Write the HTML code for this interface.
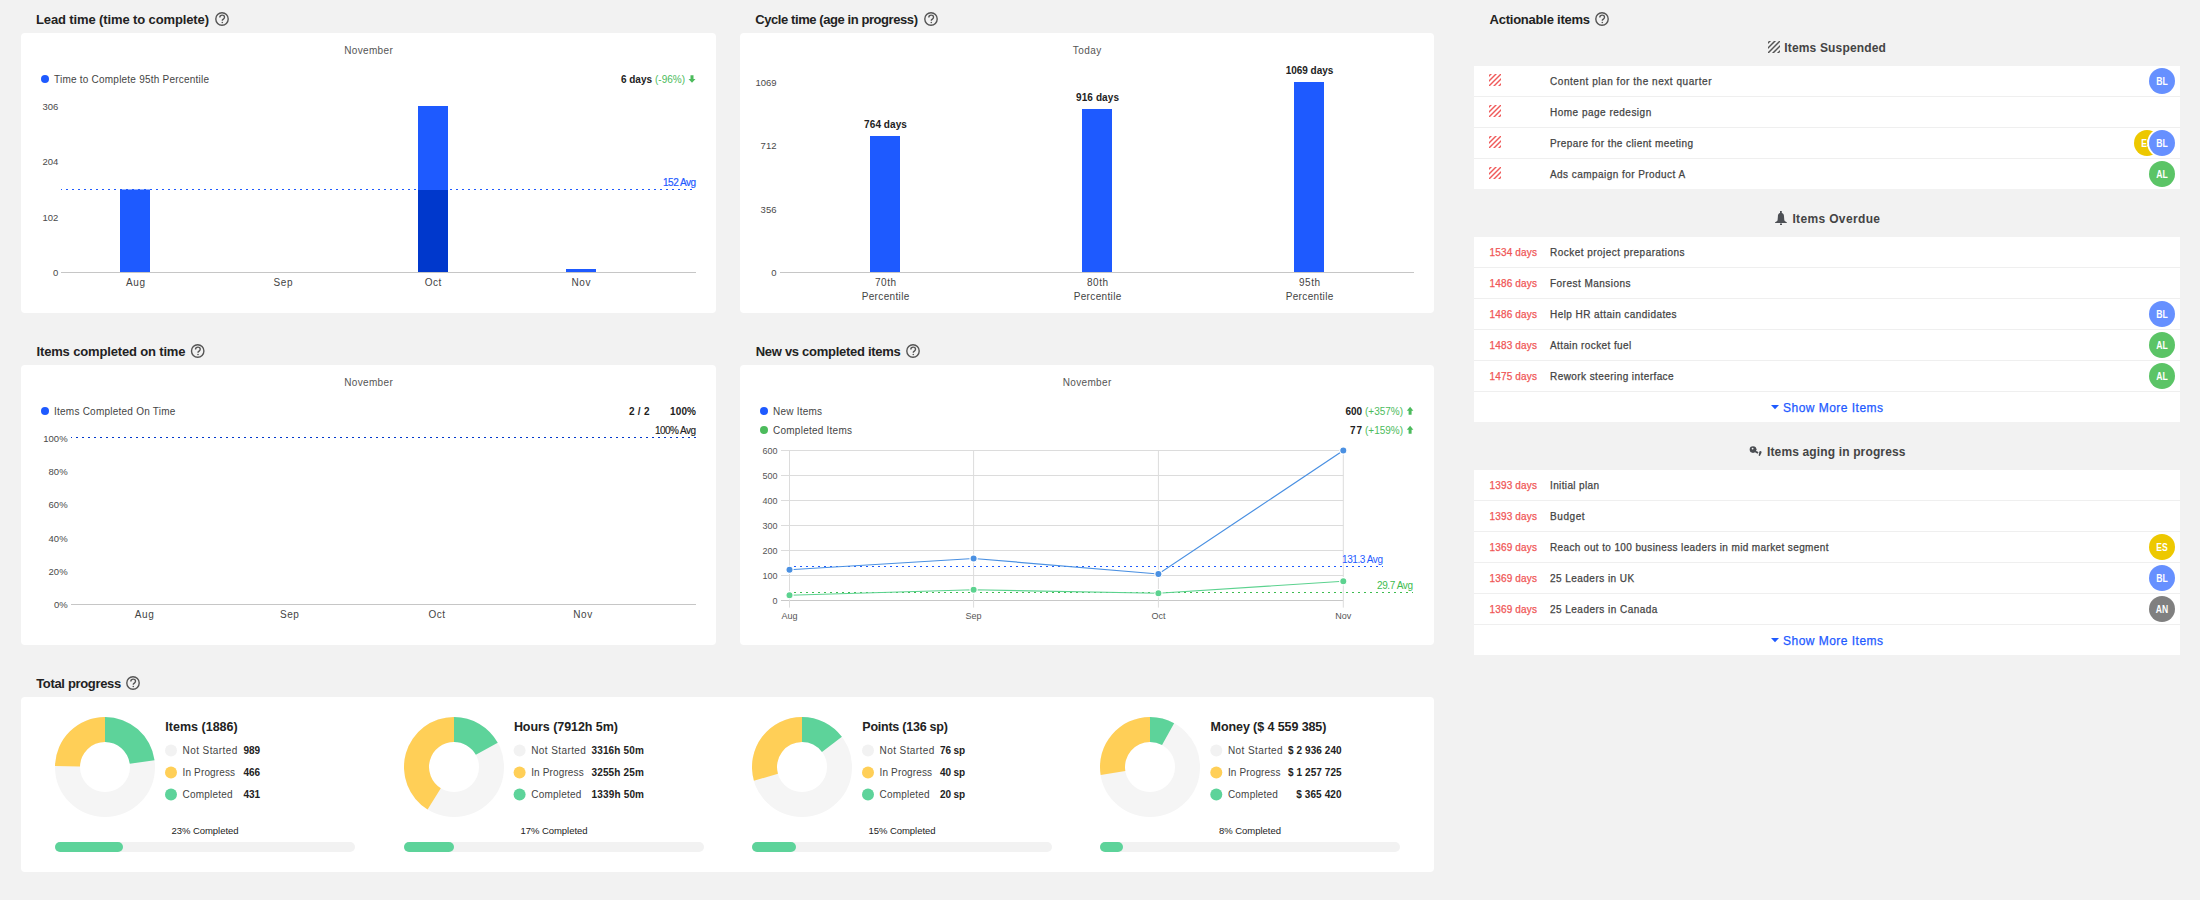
<!DOCTYPE html>
<html><head><meta charset="utf-8"><title>Dashboard</title>
<style>
html,body{margin:0;padding:0;}
body{width:2200px;height:900px;background:#f2f2f2;position:relative;overflow:hidden;font-family:"Liberation Sans",sans-serif;}
.card{position:absolute;background:#fff;border-radius:4px;}
.row{position:absolute;left:1474px;width:706px;background:#fff;}
svg.ov{position:absolute;left:0;top:0;}
svg text{font-family:"Liberation Sans",sans-serif;}
</style></head><body>
<div class="card" style="left:21px;top:33px;width:695px;height:280px"></div>
<div class="card" style="left:740px;top:33px;width:694px;height:280px"></div>
<div class="card" style="left:21px;top:365px;width:695px;height:280px"></div>
<div class="card" style="left:740px;top:365px;width:694px;height:280px"></div>
<div class="card" style="left:21px;top:697px;width:1413px;height:175px"></div>
<div class="row" style="top:66px;height:30px;border-bottom:1px solid #efefef"></div>
<div class="row" style="top:97px;height:30px;border-bottom:1px solid #efefef"></div>
<div class="row" style="top:128px;height:30px;border-bottom:1px solid #efefef"></div>
<div class="row" style="top:159px;height:30px"></div>
<div class="row" style="top:237px;height:30px;border-bottom:1px solid #efefef"></div>
<div class="row" style="top:268px;height:30px;border-bottom:1px solid #efefef"></div>
<div class="row" style="top:299px;height:30px;border-bottom:1px solid #efefef"></div>
<div class="row" style="top:330px;height:30px;border-bottom:1px solid #efefef"></div>
<div class="row" style="top:361px;height:30px;border-bottom:1px solid #efefef"></div>
<div class="row" style="top:392px;height:30px"></div>
<div class="row" style="top:470px;height:30px;border-bottom:1px solid #efefef"></div>
<div class="row" style="top:501px;height:30px;border-bottom:1px solid #efefef"></div>
<div class="row" style="top:532px;height:30px;border-bottom:1px solid #efefef"></div>
<div class="row" style="top:563px;height:30px;border-bottom:1px solid #efefef"></div>
<div class="row" style="top:594px;height:30px;border-bottom:1px solid #efefef"></div>
<div class="row" style="top:625px;height:30px"></div>
<svg class="ov" width="2200" height="900" viewBox="0 0 2200 900">
<defs><clipPath id="sq"><rect x="0" y="0" width="12" height="12"/></clipPath></defs>
<g fill="#444">
<text x="36" y="24" font-size="13" font-weight="bold" fill="#222" textLength="173.0" lengthAdjust="spacing">Lead time (time to complete)</text>
<g transform="translate(222,19)" fill="none" stroke="#555"><circle r="6.2" stroke-width="1.4"/><path d="M-2.2,-1.5 C-2.2,-3.2 -1.1,-3.9 0.2,-3.9 C1.6,-3.9 2.5,-3.0 2.5,-1.8 C2.5,-0.6 1.7,-0.2 1.0,0.4 C0.5,0.8 0.3,1.1 0.3,1.7" stroke-width="1.4"/><circle cx="0.3" cy="3.45" r="0.8" fill="#555" stroke="none"/></g>
<text x="755.3" y="24" font-size="13" font-weight="bold" fill="#222" textLength="162.7" lengthAdjust="spacing">Cycle time (age in progress)</text>
<g transform="translate(931,19)" fill="none" stroke="#555"><circle r="6.2" stroke-width="1.4"/><path d="M-2.2,-1.5 C-2.2,-3.2 -1.1,-3.9 0.2,-3.9 C1.6,-3.9 2.5,-3.0 2.5,-1.8 C2.5,-0.6 1.7,-0.2 1.0,0.4 C0.5,0.8 0.3,1.1 0.3,1.7" stroke-width="1.4"/><circle cx="0.3" cy="3.45" r="0.8" fill="#555" stroke="none"/></g>
<text x="1489.5" y="24" font-size="13" font-weight="bold" fill="#222" textLength="100.6" lengthAdjust="spacing">Actionable items</text>
<g transform="translate(1602,19)" fill="none" stroke="#555"><circle r="6.2" stroke-width="1.4"/><path d="M-2.2,-1.5 C-2.2,-3.2 -1.1,-3.9 0.2,-3.9 C1.6,-3.9 2.5,-3.0 2.5,-1.8 C2.5,-0.6 1.7,-0.2 1.0,0.4 C0.5,0.8 0.3,1.1 0.3,1.7" stroke-width="1.4"/><circle cx="0.3" cy="3.45" r="0.8" fill="#555" stroke="none"/></g>
<text x="36.5" y="356" font-size="13" font-weight="bold" fill="#222" textLength="149.0" lengthAdjust="spacing">Items completed on time</text>
<g transform="translate(197.7,351)" fill="none" stroke="#555"><circle r="6.2" stroke-width="1.4"/><path d="M-2.2,-1.5 C-2.2,-3.2 -1.1,-3.9 0.2,-3.9 C1.6,-3.9 2.5,-3.0 2.5,-1.8 C2.5,-0.6 1.7,-0.2 1.0,0.4 C0.5,0.8 0.3,1.1 0.3,1.7" stroke-width="1.4"/><circle cx="0.3" cy="3.45" r="0.8" fill="#555" stroke="none"/></g>
<text x="755.7" y="356" font-size="13" font-weight="bold" fill="#222" textLength="145.0" lengthAdjust="spacing">New vs completed items</text>
<g transform="translate(913,351)" fill="none" stroke="#555"><circle r="6.2" stroke-width="1.4"/><path d="M-2.2,-1.5 C-2.2,-3.2 -1.1,-3.9 0.2,-3.9 C1.6,-3.9 2.5,-3.0 2.5,-1.8 C2.5,-0.6 1.7,-0.2 1.0,0.4 C0.5,0.8 0.3,1.1 0.3,1.7" stroke-width="1.4"/><circle cx="0.3" cy="3.45" r="0.8" fill="#555" stroke="none"/></g>
<text x="36.2" y="688" font-size="13" font-weight="bold" fill="#222" textLength="85.0" lengthAdjust="spacing">Total progress</text>
<g transform="translate(133,683)" fill="none" stroke="#555"><circle r="6.2" stroke-width="1.4"/><path d="M-2.2,-1.5 C-2.2,-3.2 -1.1,-3.9 0.2,-3.9 C1.6,-3.9 2.5,-3.0 2.5,-1.8 C2.5,-0.6 1.7,-0.2 1.0,0.4 C0.5,0.8 0.3,1.1 0.3,1.7" stroke-width="1.4"/><circle cx="0.3" cy="3.45" r="0.8" fill="#555" stroke="none"/></g>
<text x="368.5" y="54" font-size="10" fill="#555" text-anchor="middle" textLength="48.5" lengthAdjust="spacing">November</text>
<circle cx="45" cy="79" r="4" fill="#1e5aff" />
<text x="54" y="83" font-size="10" textLength="155.0" lengthAdjust="spacing">Time to Complete 95th Percentile</text>
<text x="621" y="83" font-size="10" font-weight="bold" fill="#222" textLength="31.0" lengthAdjust="spacing">6 days</text>
<text x="655" y="83" font-size="10" fill="#4cbb5c" textLength="30.0" lengthAdjust="spacing">(-96%)</text>
<path d="M690.5,75.2 H693.5 V79.0 H695.5 L692.0,82.8 L688.5,79.0 H690.5 Z" fill="#4cbb5c"/>
<text x="58.4" y="110" font-size="9.5" fill="#4a4a4a" text-anchor="end" textLength="15.9" lengthAdjust="spacing">306</text>
<text x="58.4" y="165" font-size="9.5" fill="#4a4a4a" text-anchor="end" textLength="15.9" lengthAdjust="spacing">204</text>
<text x="58.4" y="221" font-size="9.5" fill="#4a4a4a" text-anchor="end" textLength="15.9" lengthAdjust="spacing">102</text>
<text x="58.4" y="276" font-size="9.5" fill="#4a4a4a" text-anchor="end" textLength="5.3" lengthAdjust="spacing">0</text>
<rect x="120" y="189.5" width="30" height="82.5" fill="#1e5aff"/>
<rect x="418" y="106" width="30" height="84" fill="#1e5aff"/>
<rect x="418" y="190" width="30" height="82" fill="#0038cc"/>
<rect x="566" y="269" width="30" height="3" fill="#1e5aff"/>
<line x1="61" y1="272.5" x2="696" y2="272.5" stroke="#c6c6c6" stroke-width="1"/>
<line x1="61" y1="189.5" x2="696" y2="189.5" stroke="#1e5aff" stroke-width="1" stroke-dasharray="2 4" stroke-dashoffset="1"/>
<text x="696" y="186" font-size="10" fill="#1e5aff" text-anchor="end" textLength="33.0" lengthAdjust="spacing" stroke="#1e5aff" stroke-width="0.2">152 Avg</text>
<text x="135.5" y="286" font-size="10" text-anchor="middle" textLength="18.9" lengthAdjust="spacing">Aug</text>
<text x="283" y="286" font-size="10" text-anchor="middle" textLength="18.9" lengthAdjust="spacing">Sep</text>
<text x="433" y="286" font-size="10" text-anchor="middle" textLength="16.5" lengthAdjust="spacing">Oct</text>
<text x="581" y="286" font-size="10" text-anchor="middle" textLength="18.9" lengthAdjust="spacing">Nov</text>
<text x="1087" y="54" font-size="10" fill="#555" text-anchor="middle" textLength="28.4" lengthAdjust="spacing">Today</text>
<text x="776.5" y="86" font-size="9.5" fill="#4a4a4a" text-anchor="end" textLength="21.1" lengthAdjust="spacing">1069</text>
<text x="776.5" y="149" font-size="9.5" fill="#4a4a4a" text-anchor="end" textLength="15.9" lengthAdjust="spacing">712</text>
<text x="776.5" y="213" font-size="9.5" fill="#4a4a4a" text-anchor="end" textLength="15.9" lengthAdjust="spacing">356</text>
<text x="776.5" y="276" font-size="9.5" fill="#4a4a4a" text-anchor="end" textLength="5.3" lengthAdjust="spacing">0</text>
<rect x="870" y="136" width="30" height="136" fill="#1e5aff"/>
<text x="885.5" y="128" font-size="10" font-weight="bold" fill="#222" text-anchor="middle" textLength="42.8" lengthAdjust="spacing">764 days</text>
<text x="885.5" y="286" font-size="10" text-anchor="middle" textLength="21.2" lengthAdjust="spacing">70th</text>
<text x="885.5" y="300" font-size="10" text-anchor="middle" textLength="47.6" lengthAdjust="spacing">Percentile</text>
<rect x="1082" y="109" width="30" height="163" fill="#1e5aff"/>
<text x="1097.5" y="101" font-size="10" font-weight="bold" fill="#222" text-anchor="middle" textLength="42.9" lengthAdjust="spacing">916 days</text>
<text x="1097.5" y="286" font-size="10" text-anchor="middle" textLength="21.2" lengthAdjust="spacing">80th</text>
<text x="1097.5" y="300" font-size="10" text-anchor="middle" textLength="47.6" lengthAdjust="spacing">Percentile</text>
<rect x="1294" y="82" width="30" height="190" fill="#1e5aff"/>
<text x="1309.5" y="74" font-size="10" font-weight="bold" fill="#222" text-anchor="middle" textLength="47.6" lengthAdjust="spacing">1069 days</text>
<text x="1309.5" y="286" font-size="10" text-anchor="middle" textLength="21.2" lengthAdjust="spacing">95th</text>
<text x="1309.5" y="300" font-size="10" text-anchor="middle" textLength="47.6" lengthAdjust="spacing">Percentile</text>
<line x1="780" y1="272.5" x2="1414" y2="272.5" stroke="#c6c6c6" stroke-width="1"/>
<text x="368.5" y="386" font-size="10" fill="#555" text-anchor="middle" textLength="48.5" lengthAdjust="spacing">November</text>
<circle cx="45" cy="411" r="4" fill="#1e5aff" />
<text x="54" y="415" font-size="10" textLength="121.4" lengthAdjust="spacing">Items Completed On Time</text>
<text x="629" y="415" font-size="10" font-weight="bold" fill="#222" textLength="20.5" lengthAdjust="spacing">2 / 2</text>
<text x="670" y="415" font-size="10" font-weight="bold" fill="#222" textLength="26.0" lengthAdjust="spacing">100%</text>
<text x="696" y="434" font-size="10" fill="#222" text-anchor="end" textLength="41.0" lengthAdjust="spacing" stroke="#222" stroke-width="0.15">100% Avg</text>
<text x="67.6" y="442" font-size="9.5" fill="#4a4a4a" text-anchor="end" textLength="24.3" lengthAdjust="spacing">100%</text>
<text x="67.6" y="475" font-size="9.5" fill="#4a4a4a" text-anchor="end" textLength="19.0" lengthAdjust="spacing">80%</text>
<text x="67.6" y="508" font-size="9.5" fill="#4a4a4a" text-anchor="end" textLength="19.0" lengthAdjust="spacing">60%</text>
<text x="67.6" y="542" font-size="9.5" fill="#4a4a4a" text-anchor="end" textLength="19.0" lengthAdjust="spacing">40%</text>
<text x="67.6" y="575" font-size="9.5" fill="#4a4a4a" text-anchor="end" textLength="19.0" lengthAdjust="spacing">20%</text>
<text x="67.6" y="608" font-size="9.5" fill="#4a4a4a" text-anchor="end" textLength="13.7" lengthAdjust="spacing">0%</text>
<line x1="71" y1="604.5" x2="696" y2="604.5" stroke="#c6c6c6" stroke-width="1"/>
<line x1="71" y1="437.5" x2="696" y2="437.5" stroke="#0038cc" stroke-width="1" stroke-dasharray="2 4" stroke-dashoffset="1"/>
<text x="144.3" y="618" font-size="10" text-anchor="middle" textLength="18.9" lengthAdjust="spacing">Aug</text>
<text x="289.4" y="618" font-size="10" text-anchor="middle" textLength="18.9" lengthAdjust="spacing">Sep</text>
<text x="436.7" y="618" font-size="10" text-anchor="middle" textLength="16.5" lengthAdjust="spacing">Oct</text>
<text x="582.7" y="618" font-size="10" text-anchor="middle" textLength="18.9" lengthAdjust="spacing">Nov</text>
<text x="1087" y="386" font-size="10" fill="#555" text-anchor="middle" textLength="48.5" lengthAdjust="spacing">November</text>
<circle cx="764" cy="411" r="4" fill="#1e5aff" />
<circle cx="764" cy="430" r="4" fill="#4cbb5c" />
<text x="773" y="415" font-size="10" textLength="49.0" lengthAdjust="spacing">New Items</text>
<text x="773" y="434" font-size="10" textLength="79.0" lengthAdjust="spacing">Completed Items</text>
<text x="1345.5" y="415" font-size="10" font-weight="bold" fill="#222" textLength="16.5" lengthAdjust="spacing">600</text>
<text x="1365" y="415" font-size="10" fill="#4cbb5c" textLength="38.0" lengthAdjust="spacing">(+357%)</text>
<path d="M1408.6,414.8 H1411.6 V410.8 H1413.3999999999999 L1410.1,406.8 L1406.8,410.8 H1408.6 Z" fill="#4cbb5c"/>
<text x="1350" y="434" font-size="10" font-weight="bold" fill="#222" textLength="12.0" lengthAdjust="spacing">77</text>
<text x="1365" y="434" font-size="10" fill="#4cbb5c" textLength="38.0" lengthAdjust="spacing">(+159%)</text>
<path d="M1408.6,433.8 H1411.6 V429.8 H1413.3999999999999 L1410.1,425.8 L1406.8,429.8 H1408.6 Z" fill="#4cbb5c"/>
<line x1="781" y1="450.5" x2="1343.3" y2="450.5" stroke="#dcdcdc" stroke-width="1"/>
<text x="777.5" y="453.8" font-size="9" fill="#555" text-anchor="end">600</text>
<line x1="781" y1="475.5" x2="1343.3" y2="475.5" stroke="#dcdcdc" stroke-width="1"/>
<text x="777.5" y="478.8" font-size="9" fill="#555" text-anchor="end">500</text>
<line x1="781" y1="500.5" x2="1343.3" y2="500.5" stroke="#dcdcdc" stroke-width="1"/>
<text x="777.5" y="503.8" font-size="9" fill="#555" text-anchor="end">400</text>
<line x1="781" y1="525.5" x2="1343.3" y2="525.5" stroke="#dcdcdc" stroke-width="1"/>
<text x="777.5" y="528.8" font-size="9" fill="#555" text-anchor="end">300</text>
<line x1="781" y1="550.5" x2="1343.3" y2="550.5" stroke="#dcdcdc" stroke-width="1"/>
<text x="777.5" y="553.8" font-size="9" fill="#555" text-anchor="end">200</text>
<line x1="781" y1="575.5" x2="1343.3" y2="575.5" stroke="#dcdcdc" stroke-width="1"/>
<text x="777.5" y="578.8" font-size="9" fill="#555" text-anchor="end">100</text>
<line x1="781" y1="600.5" x2="1343.3" y2="600.5" stroke="#c8c8c8" stroke-width="1"/>
<text x="777.5" y="603.8" font-size="9" fill="#555" text-anchor="end">0</text>
<line x1="789.5" y1="450.5" x2="789.5" y2="607.6" stroke="#dcdcdc" stroke-width="1"/>
<line x1="973.6" y1="450.5" x2="973.6" y2="607.6" stroke="#dcdcdc" stroke-width="1"/>
<line x1="1158.4" y1="450.5" x2="1158.4" y2="607.6" stroke="#dcdcdc" stroke-width="1"/>
<line x1="1343.3" y1="450.5" x2="1343.3" y2="607.6" stroke="#dcdcdc" stroke-width="1"/>
<text x="789.5" y="619" font-size="9" fill="#555" text-anchor="middle">Aug</text>
<text x="973.6" y="619" font-size="9" fill="#555" text-anchor="middle">Sep</text>
<text x="1158.4" y="619" font-size="9" fill="#555" text-anchor="middle">Oct</text>
<text x="1343.3" y="619" font-size="9" fill="#555" text-anchor="middle">Nov</text>
<line x1="789" y1="566.5" x2="1383" y2="566.5" stroke="#1e5aff" stroke-width="1" stroke-dasharray="2 4" stroke-dashoffset="1"/>
<line x1="789" y1="592.5" x2="1413" y2="592.5" stroke="#3dbb4f" stroke-width="1" stroke-dasharray="2 4" stroke-dashoffset="1"/>
<polyline points="789.5,569.75 973.6,558.5 1158.4,574.0 1343.3,450.5" fill="none" stroke="#4a90e2" stroke-width="1.2"/>
<polyline points="789.5,595.25 973.6,589.75 1158.4,593.25 1343.3,581.25" fill="none" stroke="#5cd28f" stroke-width="1.2"/>
<circle cx="789.5" cy="569.75" r="3.6" fill="#4a90e2" stroke="#fff" stroke-width="1.2"/>
<circle cx="973.6" cy="558.5" r="3.6" fill="#4a90e2" stroke="#fff" stroke-width="1.2"/>
<circle cx="1158.4" cy="574.0" r="3.6" fill="#4a90e2" stroke="#fff" stroke-width="1.2"/>
<circle cx="1343.3" cy="450.5" r="3.6" fill="#4a90e2" stroke="#fff" stroke-width="1.2"/>
<circle cx="789.5" cy="595.25" r="3.6" fill="#5cd28f" stroke="#fff" stroke-width="1.2"/>
<circle cx="973.6" cy="589.75" r="3.6" fill="#5cd28f" stroke="#fff" stroke-width="1.2"/>
<circle cx="1158.4" cy="593.25" r="3.6" fill="#5cd28f" stroke="#fff" stroke-width="1.2"/>
<circle cx="1343.3" cy="581.25" r="3.6" fill="#5cd28f" stroke="#fff" stroke-width="1.2"/>
<text x="1383" y="563" font-size="10" fill="#1e5aff" text-anchor="end" textLength="41.0" lengthAdjust="spacing">131.3 Avg</text>
<text x="1413" y="589" font-size="10" fill="#3dbb4f" text-anchor="end" textLength="36.0" lengthAdjust="spacing">29.7 Avg</text>
<circle cx="105" cy="767" r="37.5" fill="none" stroke="#f5f5f5" stroke-width="25"/>
<path d="M105.00,717.00 A50,50 0 0 1 154.55,760.27 L129.77,763.64 A25,25 0 0 0 105.00,742.00 Z" fill="#5dd39a"/>
<path d="M55.01,766.08 A50,50 0 0 1 105.00,717.00 L105.00,742.00 A25,25 0 0 0 80.00,766.54 Z" fill="#ffcf57"/>
<text x="165.3" y="731" font-size="12.5" font-weight="bold" fill="#222" textLength="72.4" lengthAdjust="spacing">Items (1886)</text>
<circle cx="171.0" cy="750.4" r="6" fill="#f2f2f2" />
<text x="182.60000000000002" y="754" font-size="10" textLength="54.7" lengthAdjust="spacing">Not Started</text>
<text x="243.6" y="754" font-size="10" font-weight="bold" fill="#222" textLength="16.5" lengthAdjust="spacing">989</text>
<circle cx="171.0" cy="772.4" r="6" fill="#ffcf57" />
<text x="182.60000000000002" y="776" font-size="10" textLength="52.5" lengthAdjust="spacing">In Progress</text>
<text x="243.6" y="776" font-size="10" font-weight="bold" fill="#222" textLength="16.5" lengthAdjust="spacing">466</text>
<circle cx="171.0" cy="794.4" r="6" fill="#5dd39a" />
<text x="182.60000000000002" y="798" font-size="10" textLength="50.0" lengthAdjust="spacing">Completed</text>
<text x="243.6" y="798" font-size="10" font-weight="bold" fill="#222" textLength="16.5" lengthAdjust="spacing">431</text>
<rect x="55" y="842" width="300" height="10" fill="#f2f2f2" rx="5"/>
<rect x="55" y="842" width="68" height="10" fill="#5dd39a" rx="5"/>
<text x="205" y="834" font-size="9.5" fill="#222" text-anchor="middle" textLength="67.0" lengthAdjust="spacing">23% Completed</text>
<circle cx="454" cy="767" r="37.5" fill="none" stroke="#f5f5f5" stroke-width="25"/>
<path d="M454.00,717.00 A50,50 0 0 1 497.72,742.73 L475.86,754.87 A25,25 0 0 0 454.00,742.00 Z" fill="#5dd39a"/>
<path d="M427.59,809.46 A50,50 0 0 1 454.00,717.00 L454.00,742.00 A25,25 0 0 0 440.80,788.23 Z" fill="#ffcf57"/>
<text x="513.9" y="731" font-size="12.5" font-weight="bold" fill="#222" textLength="104.0" lengthAdjust="spacing">Hours (7912h 5m)</text>
<circle cx="519.6" cy="750.4" r="6" fill="#f2f2f2" />
<text x="531.1999999999999" y="754" font-size="10" textLength="54.7" lengthAdjust="spacing">Not Started</text>
<text x="591.4" y="754" font-size="10" font-weight="bold" fill="#222" textLength="52.6" lengthAdjust="spacing">3316h 50m</text>
<circle cx="519.6" cy="772.4" r="6" fill="#ffcf57" />
<text x="531.1999999999999" y="776" font-size="10" textLength="52.5" lengthAdjust="spacing">In Progress</text>
<text x="591.4" y="776" font-size="10" font-weight="bold" fill="#222" textLength="52.6" lengthAdjust="spacing">3255h 25m</text>
<circle cx="519.6" cy="794.4" r="6" fill="#5dd39a" />
<text x="531.1999999999999" y="798" font-size="10" textLength="50.0" lengthAdjust="spacing">Completed</text>
<text x="591.6" y="798" font-size="10" font-weight="bold" fill="#222" textLength="52.4" lengthAdjust="spacing">1339h 50m</text>
<rect x="404" y="842" width="300" height="10" fill="#f2f2f2" rx="5"/>
<rect x="404" y="842" width="50" height="10" fill="#5dd39a" rx="5"/>
<text x="554" y="834" font-size="9.5" fill="#222" text-anchor="middle" textLength="67.0" lengthAdjust="spacing">17% Completed</text>
<circle cx="802" cy="767" r="37.5" fill="none" stroke="#f5f5f5" stroke-width="25"/>
<path d="M802.00,717.00 A50,50 0 0 1 841.90,736.87 L821.95,751.93 A25,25 0 0 0 802.00,742.00 Z" fill="#5dd39a"/>
<path d="M753.91,780.68 A50,50 0 0 1 802.00,717.00 L802.00,742.00 A25,25 0 0 0 777.95,773.84 Z" fill="#ffcf57"/>
<text x="862.3" y="731" font-size="12.5" font-weight="bold" fill="#222" textLength="85.6" lengthAdjust="spacing">Points (136 sp)</text>
<circle cx="868.0" cy="750.4" r="6" fill="#f2f2f2" />
<text x="879.5999999999999" y="754" font-size="10" textLength="54.7" lengthAdjust="spacing">Not Started</text>
<text x="940" y="754" font-size="10" font-weight="bold" fill="#222" textLength="25.0" lengthAdjust="spacing">76 sp</text>
<circle cx="868.0" cy="772.4" r="6" fill="#ffcf57" />
<text x="879.5999999999999" y="776" font-size="10" textLength="52.5" lengthAdjust="spacing">In Progress</text>
<text x="940" y="776" font-size="10" font-weight="bold" fill="#222" textLength="25.0" lengthAdjust="spacing">40 sp</text>
<circle cx="868.0" cy="794.4" r="6" fill="#5dd39a" />
<text x="879.5999999999999" y="798" font-size="10" textLength="50.0" lengthAdjust="spacing">Completed</text>
<text x="940" y="798" font-size="10" font-weight="bold" fill="#222" textLength="25.0" lengthAdjust="spacing">20 sp</text>
<rect x="752" y="842" width="300" height="10" fill="#f2f2f2" rx="5"/>
<rect x="752" y="842" width="44" height="10" fill="#5dd39a" rx="5"/>
<text x="902" y="834" font-size="9.5" fill="#222" text-anchor="middle" textLength="67.0" lengthAdjust="spacing">15% Completed</text>
<circle cx="1150" cy="767" r="37.5" fill="none" stroke="#f5f5f5" stroke-width="25"/>
<path d="M1150.00,717.00 A50,50 0 0 1 1174.13,723.21 L1162.06,745.10 A25,25 0 0 0 1150.00,742.00 Z" fill="#5dd39a"/>
<path d="M1100.66,775.09 A50,50 0 0 1 1150.00,717.00 L1150.00,742.00 A25,25 0 0 0 1125.33,771.04 Z" fill="#ffcf57"/>
<text x="1210.6" y="731" font-size="12.5" font-weight="bold" fill="#222" textLength="115.8" lengthAdjust="spacing">Money ($ 4 559 385)</text>
<circle cx="1216.3" cy="750.4" r="6" fill="#f2f2f2" />
<text x="1227.8999999999999" y="754" font-size="10" textLength="54.7" lengthAdjust="spacing">Not Started</text>
<text x="1288" y="754" font-size="10" font-weight="bold" fill="#222" textLength="53.6" lengthAdjust="spacing">$ 2 936 240</text>
<circle cx="1216.3" cy="772.4" r="6" fill="#ffcf57" />
<text x="1227.8999999999999" y="776" font-size="10" textLength="52.5" lengthAdjust="spacing">In Progress</text>
<text x="1288" y="776" font-size="10" font-weight="bold" fill="#222" textLength="53.6" lengthAdjust="spacing">$ 1 257 725</text>
<circle cx="1216.3" cy="794.4" r="6" fill="#5dd39a" />
<text x="1227.8999999999999" y="798" font-size="10" textLength="50.0" lengthAdjust="spacing">Completed</text>
<text x="1296.2" y="798" font-size="10" font-weight="bold" fill="#222" textLength="45.4" lengthAdjust="spacing">$ 365 420</text>
<rect x="1100" y="842" width="300" height="10" fill="#f2f2f2" rx="5"/>
<rect x="1100" y="842" width="23" height="10" fill="#5dd39a" rx="5"/>
<text x="1250" y="834" font-size="9.5" fill="#222" text-anchor="middle" textLength="62.0" lengthAdjust="spacing">8% Completed</text>
<g transform="translate(1768,41)"><g clip-path="url(#sq)"><line x1="-12" y1="14" x2="4" y2="-2" stroke="#555" stroke-width="1.5"/><line x1="-7" y1="14" x2="9" y2="-2" stroke="#555" stroke-width="1.5"/><line x1="-2" y1="14" x2="14" y2="-2" stroke="#555" stroke-width="1.5"/><line x1="3" y1="14" x2="19" y2="-2" stroke="#555" stroke-width="1.5"/><line x1="8" y1="14" x2="24" y2="-2" stroke="#555" stroke-width="1.5"/></g></g>
<text x="1784.3" y="52" font-size="12" font-weight="bold" textLength="101.6" lengthAdjust="spacing">Items Suspended</text>
<g clip-path="url(#sq)" transform="translate(1489,74)"><line x1="-12" y1="14" x2="4" y2="-2" stroke="#f05a5a" stroke-width="1.4"/><line x1="-7" y1="14" x2="9" y2="-2" stroke="#f05a5a" stroke-width="1.4"/><line x1="-2" y1="14" x2="14" y2="-2" stroke="#f05a5a" stroke-width="1.4"/><line x1="3" y1="14" x2="19" y2="-2" stroke="#f05a5a" stroke-width="1.4"/><line x1="8" y1="14" x2="24" y2="-2" stroke="#f05a5a" stroke-width="1.4"/></g>
<text x="1550" y="85" font-size="10" textLength="161.5" lengthAdjust="spacing" stroke="#444" stroke-width="0.25">Content plan for the next quarter</text>
<circle cx="2162" cy="81" r="13" fill="#6690ff" />
<text x="2162" y="85" font-size="10" font-weight="bold" fill="#fff" text-anchor="middle" textLength="11.5" lengthAdjust="spacingAndGlyphs">BL</text>
<g clip-path="url(#sq)" transform="translate(1489,105)"><line x1="-12" y1="14" x2="4" y2="-2" stroke="#f05a5a" stroke-width="1.4"/><line x1="-7" y1="14" x2="9" y2="-2" stroke="#f05a5a" stroke-width="1.4"/><line x1="-2" y1="14" x2="14" y2="-2" stroke="#f05a5a" stroke-width="1.4"/><line x1="3" y1="14" x2="19" y2="-2" stroke="#f05a5a" stroke-width="1.4"/><line x1="8" y1="14" x2="24" y2="-2" stroke="#f05a5a" stroke-width="1.4"/></g>
<text x="1550" y="116" font-size="10" textLength="101.2" lengthAdjust="spacing" stroke="#444" stroke-width="0.25">Home page redesign</text>
<g clip-path="url(#sq)" transform="translate(1489,136)"><line x1="-12" y1="14" x2="4" y2="-2" stroke="#f05a5a" stroke-width="1.4"/><line x1="-7" y1="14" x2="9" y2="-2" stroke="#f05a5a" stroke-width="1.4"/><line x1="-2" y1="14" x2="14" y2="-2" stroke="#f05a5a" stroke-width="1.4"/><line x1="3" y1="14" x2="19" y2="-2" stroke="#f05a5a" stroke-width="1.4"/><line x1="8" y1="14" x2="24" y2="-2" stroke="#f05a5a" stroke-width="1.4"/></g>
<text x="1550" y="147" font-size="10" textLength="143.0" lengthAdjust="spacing" stroke="#444" stroke-width="0.25">Prepare for the client meeting</text>
<circle cx="2147" cy="143" r="13" fill="#edc800" />
<text x="2147" y="147" font-size="10" font-weight="bold" fill="#fff" text-anchor="middle" textLength="11.5" lengthAdjust="spacingAndGlyphs">ES</text>
<circle cx="2162" cy="143" r="14.8" fill="#fff" />
<circle cx="2162" cy="143" r="13" fill="#6690ff" />
<text x="2162" y="147" font-size="10" font-weight="bold" fill="#fff" text-anchor="middle" textLength="11.5" lengthAdjust="spacingAndGlyphs">BL</text>
<g clip-path="url(#sq)" transform="translate(1489,167)"><line x1="-12" y1="14" x2="4" y2="-2" stroke="#f05a5a" stroke-width="1.4"/><line x1="-7" y1="14" x2="9" y2="-2" stroke="#f05a5a" stroke-width="1.4"/><line x1="-2" y1="14" x2="14" y2="-2" stroke="#f05a5a" stroke-width="1.4"/><line x1="3" y1="14" x2="19" y2="-2" stroke="#f05a5a" stroke-width="1.4"/><line x1="8" y1="14" x2="24" y2="-2" stroke="#f05a5a" stroke-width="1.4"/></g>
<text x="1550" y="178" font-size="10" textLength="135.1" lengthAdjust="spacing" stroke="#444" stroke-width="0.25">Ads campaign for Product A</text>
<circle cx="2162" cy="174" r="13" fill="#5bc466" />
<text x="2162" y="178" font-size="10" font-weight="bold" fill="#fff" text-anchor="middle" textLength="11.5" lengthAdjust="spacingAndGlyphs">AL</text>
<path d="M1780,211 H1781.8 V213 C1783.5,213.5 1784,214.8 1784,216.5 L1784.3,220 C1784.5,221 1785.5,221.8 1786.8,222.3 V222.9 H1775.1 V222.3 C1776.4,221.8 1777.5,221 1777.6,220 L1777.9,216.5 C1777.9,214.8 1778.4,213.5 1780,213 Z M1780,223.6 H1782 V224.9 H1780 Z" fill="#4d5055"/>
<text x="1792.4" y="223" font-size="12" font-weight="bold" textLength="87.6" lengthAdjust="spacing">Items Overdue</text>
<text x="1489.5" y="256" font-size="10" fill="#f05656" textLength="47.5" lengthAdjust="spacing" stroke="#f05656" stroke-width="0.25">1534 days</text>
<text x="1550" y="256" font-size="10" textLength="134.5" lengthAdjust="spacing" stroke="#444" stroke-width="0.25">Rocket project preparations</text>
<text x="1489.5" y="287" font-size="10" fill="#f05656" textLength="47.5" lengthAdjust="spacing" stroke="#f05656" stroke-width="0.25">1486 days</text>
<text x="1550" y="287" font-size="10" textLength="80.6" lengthAdjust="spacing" stroke="#444" stroke-width="0.25">Forest Mansions</text>
<text x="1489.5" y="318" font-size="10" fill="#f05656" textLength="47.5" lengthAdjust="spacing" stroke="#f05656" stroke-width="0.25">1486 days</text>
<text x="1550" y="318" font-size="10" textLength="126.6" lengthAdjust="spacing" stroke="#444" stroke-width="0.25">Help HR attain candidates</text>
<circle cx="2162" cy="314" r="13" fill="#6690ff" />
<text x="2162" y="318" font-size="10" font-weight="bold" fill="#fff" text-anchor="middle" textLength="11.5" lengthAdjust="spacingAndGlyphs">BL</text>
<text x="1489.5" y="349" font-size="10" fill="#f05656" textLength="47.5" lengthAdjust="spacing" stroke="#f05656" stroke-width="0.25">1483 days</text>
<text x="1550" y="349" font-size="10" textLength="81.2" lengthAdjust="spacing" stroke="#444" stroke-width="0.25">Attain rocket fuel</text>
<circle cx="2162" cy="345" r="13" fill="#5bc466" />
<text x="2162" y="349" font-size="10" font-weight="bold" fill="#fff" text-anchor="middle" textLength="11.5" lengthAdjust="spacingAndGlyphs">AL</text>
<text x="1489.5" y="380" font-size="10" fill="#f05656" textLength="47.5" lengthAdjust="spacing" stroke="#f05656" stroke-width="0.25">1475 days</text>
<text x="1550" y="380" font-size="10" textLength="123.6" lengthAdjust="spacing" stroke="#444" stroke-width="0.25">Rework steering interface</text>
<circle cx="2162" cy="376" r="13" fill="#5bc466" />
<text x="2162" y="380" font-size="10" font-weight="bold" fill="#fff" text-anchor="middle" textLength="11.5" lengthAdjust="spacingAndGlyphs">AL</text>
<path d="M1771,405 H1779 L1775,409.2 Z" fill="#1e5aff"/>
<text x="1783" y="412" font-size="12" fill="#1e5aff" textLength="100.0" lengthAdjust="spacing" stroke="#1e5aff" stroke-width="0.25">Show More Items</text>
<g fill="#4a4d52"><circle cx="1753" cy="449.6" r="3.3"/><circle cx="1752.6" cy="448.6" r="0.9" fill="#f2f2f2"/><path d="M1755,450.2 L1758.5,452.3 L1757.6,453.8 L1754.2,451.8 Z"/><circle cx="1755.8" cy="449.3" r="0.8"/><circle cx="1757.3" cy="452.4" r="0.7"/><path d="M1760.2,450.9 C1761.4,450.9 1761.9,451.8 1761.4,452.9 L1760.1,455.6 C1759.6,456.3 1758.6,456.1 1758.7,455.2 L1759.3,451.9 C1759.4,451.2 1759.7,450.9 1760.2,450.9 Z"/></g>
<text x="1767" y="456" font-size="12" font-weight="bold" textLength="138.5" lengthAdjust="spacing">Items aging in progress</text>
<text x="1489.5" y="489" font-size="10" fill="#f05656" textLength="47.5" lengthAdjust="spacing" stroke="#f05656" stroke-width="0.25">1393 days</text>
<text x="1550" y="489" font-size="10" textLength="49.1" lengthAdjust="spacing" stroke="#444" stroke-width="0.25">Initial plan</text>
<text x="1489.5" y="520" font-size="10" fill="#f05656" textLength="47.5" lengthAdjust="spacing" stroke="#f05656" stroke-width="0.25">1393 days</text>
<text x="1550" y="520" font-size="10" textLength="34.6" lengthAdjust="spacing" stroke="#444" stroke-width="0.25">Budget</text>
<text x="1489.5" y="551" font-size="10" fill="#f05656" textLength="47.5" lengthAdjust="spacing" stroke="#f05656" stroke-width="0.25">1369 days</text>
<text x="1550" y="551" font-size="10" textLength="278.5" lengthAdjust="spacing" stroke="#444" stroke-width="0.25">Reach out to 100 business leaders in mid market segment</text>
<circle cx="2162" cy="547" r="13" fill="#edc800" />
<text x="2162" y="551" font-size="10" font-weight="bold" fill="#fff" text-anchor="middle" textLength="11.5" lengthAdjust="spacingAndGlyphs">ES</text>
<text x="1489.5" y="582" font-size="10" fill="#f05656" textLength="47.5" lengthAdjust="spacing" stroke="#f05656" stroke-width="0.25">1369 days</text>
<text x="1550" y="582" font-size="10" textLength="84.2" lengthAdjust="spacing" stroke="#444" stroke-width="0.25">25 Leaders in UK</text>
<circle cx="2162" cy="578" r="13" fill="#6690ff" />
<text x="2162" y="582" font-size="10" font-weight="bold" fill="#fff" text-anchor="middle" textLength="11.5" lengthAdjust="spacingAndGlyphs">BL</text>
<text x="1489.5" y="613" font-size="10" fill="#f05656" textLength="47.5" lengthAdjust="spacing" stroke="#f05656" stroke-width="0.25">1369 days</text>
<text x="1550" y="613" font-size="10" textLength="107.3" lengthAdjust="spacing" stroke="#444" stroke-width="0.25">25 Leaders in Canada</text>
<circle cx="2162" cy="609" r="13" fill="#808080" />
<text x="2162" y="613" font-size="10" font-weight="bold" fill="#fff" text-anchor="middle" textLength="12.4" lengthAdjust="spacingAndGlyphs">AN</text>
<path d="M1771,638 H1779 L1775,642.2 Z" fill="#1e5aff"/>
<text x="1783" y="645" font-size="12" fill="#1e5aff" textLength="100.0" lengthAdjust="spacing" stroke="#1e5aff" stroke-width="0.25">Show More Items</text>
</g>
</svg>
</body></html>
